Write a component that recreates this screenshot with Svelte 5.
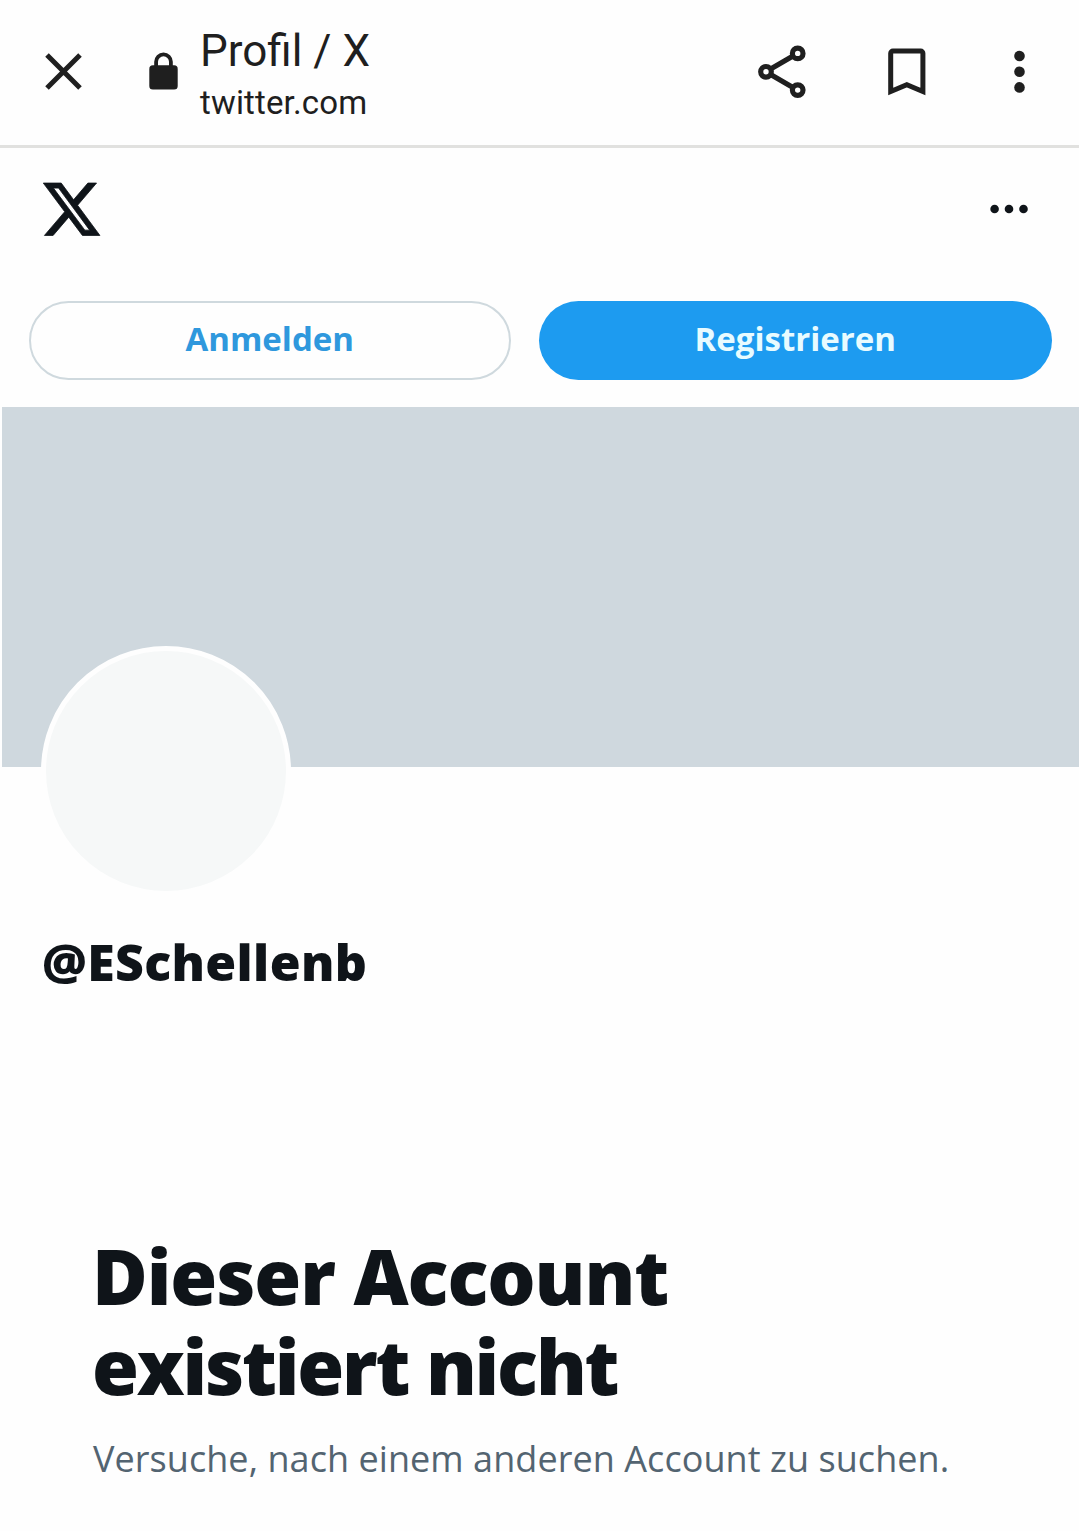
<script lang="ts">
  interface Props {
    handle?: string;
    title?: string;
    host?: string;
  }

  let { handle = 'ESchellenb', title = 'Profil / X', host = 'twitter.com' }: Props = $props();
</script>

<div class="screen">
  <header class="browser-bar">
    <button class="icon-btn" aria-label="Schließen">
      <svg width="38" height="38" viewBox="0 0 38 38" fill="none" stroke="currentColor" stroke-width="5">
        <path d="M2 2 35 35M35 2 2 35" />
      </svg>
    </button>
    <svg class="lock" width="30" height="38" viewBox="0 0 30 38" aria-hidden="true">
      <rect x=".3" y="12.3" width="28.4" height="24.3" rx="3.6" fill="currentColor" />
      <path d="M7.1 13.5V8.8a7.4 7.4 0 0 1 14.8 0v4.7" fill="none" stroke="currentColor" stroke-width="3.8" />
    </svg>
    <div class="page-info">
      <span class="page-title">{title}</span>
      <span class="page-host">{host}</span>
    </div>
    <div class="actions">
      <button class="icon-btn" aria-label="Teilen">
        <svg width="50" height="54" viewBox="0 0 50 54" fill="none" stroke="currentColor" stroke-width="5.2">
          <circle cx="40.7" cy="8.4" r="5.3" />
          <circle cx="9" cy="26.8" r="5.3" />
          <circle cx="40.7" cy="45.1" r="5.3" />
          <path d="M13.6 24.1 36 11.1M13.6 29.5 36 42.4" />
        </svg>
      </button>
      <button class="icon-btn" aria-label="Lesezeichen">
        <svg width="38" height="48" viewBox="0 0 38 48" fill="none" stroke="currentColor" stroke-width="5">
          <path d="M2.7 43.5V5.2a2.2 2.2 0 0 1 2.2-2.2h27.8a2.2 2.2 0 0 1 2.2 2.2v38.3L18.8 36.6z" />
        </svg>
      </button>
      <button class="icon-btn" aria-label="Menü">
        <svg width="12" height="44" viewBox="0 0 12 44" fill="currentColor">
          <circle cx="6.5" cy="6" r="5.3" />
          <circle cx="6.5" cy="21.7" r="5.3" />
          <circle cx="6.5" cy="37.4" r="5.3" />
        </svg>
      </button>
    </div>
  </header>

  <div class="site-bar">
    <svg width="63" height="64.5" viewBox="0 0 24 24" preserveAspectRatio="none" fill="currentColor" role="img" aria-label="X">
      <path d="M18.244 2.25h3.308l-7.227 8.26 8.502 11.24H16.17l-5.214-6.817L4.99 21.75H1.68l7.73-8.835L1.254 2.25H8.08l4.713 6.231zm-1.161 17.52h1.833L7.084 4.126H5.117z" stroke="currentColor" stroke-width=".3" />
    </svg>
    <button class="icon-btn" aria-label="Mehr">
      <svg width="38" height="10" viewBox="0 0 38 10" fill="currentColor">
        <circle cx="4.6" cy="5" r="4.3" />
        <circle cx="19" cy="5" r="4.3" />
        <circle cx="33.5" cy="5" r="4.3" />
      </svg>
    </button>
  </div>

  <div class="auth">
    <button class="btn btn-outline">Anmelden</button>
    <button class="btn btn-filled">Registrieren</button>
  </div>

  <main>
    <div class="banner"></div>
    <div class="avatar"></div>
    <h1 class="handle">@{handle}</h1>

    <section class="empty">
      <h2>
        <span class="line">Dieser Account</span>
        <span class="line line-tight">existiert nicht</span>
      </h2>
      <p>Versuche, nach einem anderen Account zu suchen.</p>
    </section>
  </main>
</div>

<style>
  :global(body) {
    background: #fefefe;
  }

  .screen {
    height: 1531px;
    overflow: hidden;
    background: #fefefe;
    color: #0f1419;
    font-family: 'Open Sans', 'Noto Sans', sans-serif;
  }

  button {
    padding: 0;
    border: 0;
    background: none;
    color: inherit;
    font: inherit;
  }

  svg {
    display: block;
    flex: none;
    overflow: visible;
  }

  .icon-btn {
    display: flex;
  }

  /* Browser toolbar */
  .browser-bar {
    display: flex;
    align-items: center;
    box-sizing: border-box;
    height: 148px;
    padding: 0 54px 2px 45px;
    border-bottom: 3px solid #e1e1df;
    color: #1f1f1f;
    font-family: Roboto, sans-serif;
  }
  .lock {
    margin-left: 66px;
  }
  .page-info {
    display: flex;
    flex-direction: column;
    margin-left: 21px;
    padding-top: 4px;
    white-space: nowrap;
  }
  .page-title {
    font-size: 44px;
    line-height: 58px;
  }
  .page-host {
    font-size: 33px;
    letter-spacing: 0.15px;
    line-height: 46px;
  }
  .actions {
    display: flex;
    align-items: center;
    margin-left: auto;
  }
  .actions .icon-btn:nth-child(2) {
    margin-left: 81px;
  }
  .actions .icon-btn:nth-child(3) {
    margin-left: 87px;
  }

  /* Site header */
  .site-bar {
    display: flex;
    align-items: center;
    justify-content: space-between;
    height: 122px;
    padding: 0 51px 0 40px;
  }

  .auth {
    display: grid;
    grid-template-columns: 481.5px 513.5px;
    gap: 28px;
    height: 79px;
    padding: 31px 0 27px 29px;
  }
  .btn {
    padding-bottom: 4px;
    border-radius: 40px;
    font-size: 33px;
    font-weight: 700;
    line-height: 71px;
  }
  .btn-outline {
    border: 2px solid #cfd9de;
    color: #2f98dd;
  }
  .btn-filled {
    background: #1d9bf0;
    color: #e8fbff;
  }

  /* Profile */
  .banner {
    height: 360px;
    margin-left: 2px;
    background: #cfd8de;
  }
  .avatar {
    position: relative;
    box-sizing: border-box;
    width: 250px;
    height: 250px;
    margin: -121px 0 0 41px;
    border: 5px solid #fefefe;
    border-radius: 50%;
    background: #f6f8f8;
  }
  .handle {
    margin: 31px 0 0 42px;
    font-size: 50px;
    font-weight: 800;
    letter-spacing: 0.35px;
    line-height: 70px;
  }

  .empty {
    margin: 234px 0 0 92px;
    white-space: nowrap;
  }
  .empty h2 {
    margin: 0;
    font-size: 76px;
    font-weight: 800;
    line-height: 90px;
  }
  .line {
    display: block;
    letter-spacing: -1.1px;
  }
  .line-tight {
    letter-spacing: -2.2px;
  }
  .empty p {
    margin: 23px 0 0 1px;
    color: #536471;
    font-size: 36px;
    letter-spacing: 0.06px;
    line-height: 50px;
  }
</style>
